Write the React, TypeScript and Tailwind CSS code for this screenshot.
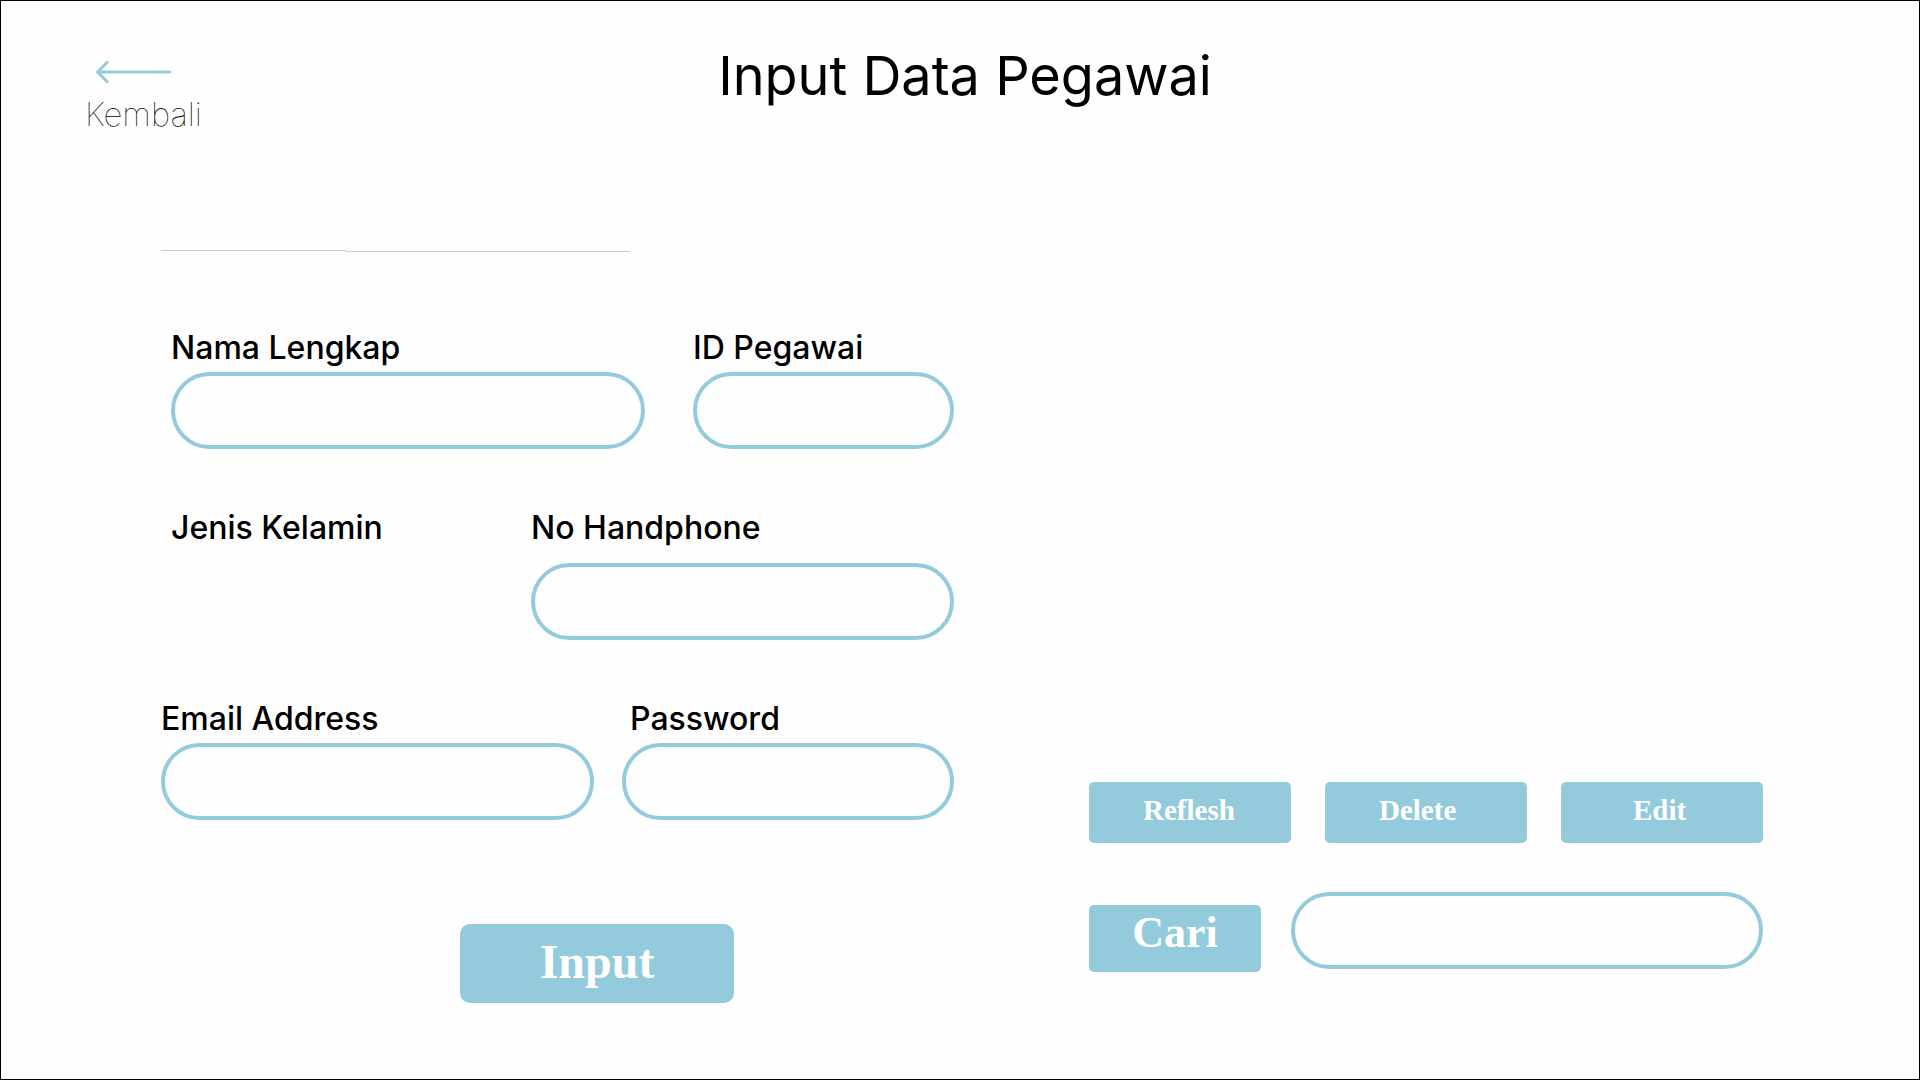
import { useId } from "react";

const pill =
  "h-[77px] w-full min-w-0 rounded-full border-4 border-[#93cbdc] bg-transparent px-8 text-2xl outline-none focus:border-[#5fb1c9]";

type FieldProps = {
  label: string;
  type?: string;
  className: string;
  labelClassName?: string;
};

function Field({ label, type = "text", className, labelClassName = "mb-1" }: FieldProps) {
  const id = useId();
  return (
    <div className={`flex min-w-0 flex-col ${className}`}>
      <label htmlFor={id} className={`text-[32px] leading-10 font-medium whitespace-nowrap ${labelClassName}`}>
        {label}
      </label>
      <input id={id} type={type} className={pill} />
    </div>
  );
}

function BackArrow() {
  return (
    <svg width="78" height="24" viewBox="0 0 78 24" fill="none" stroke="#93cbdc" strokeWidth="3" aria-hidden="true">
      <path d="M77 12H4" />
      <path d="M14 1.5L3.5 12L14 22.5" strokeLinejoin="round" />
    </svg>
  );
}

const actions = [
  { label: "Reflesh", padding: "pl-[54px]" },
  { label: "Delete", padding: "pl-[54px]" },
  { label: "Edit", padding: "pl-[72px]" },
];

export default function App() {
  return (
    <div className="min-h-screen border border-black bg-[#fefefe] pt-[45px] font-['Inter',sans-serif] text-black">
      <header className="grid grid-cols-[1fr_auto_1fr] items-start pr-[74px] pl-[84px]">
        <a href="#kembali" className="mt-3.5 flex flex-col items-start gap-3 justify-self-start">
          <span className="pl-[9px]">
            <BackArrow />
          </span>
          <span className="text-[33px] leading-9 font-thin">Kembali</span>
        </a>
        <h1 className="text-[54px] leading-[60px] font-normal">Input Data Pegawai</h1>
      </header>

      <main className="mt-[118px] grid grid-cols-[793fr_674fr] gap-[135px] pr-[156px] pl-40">
        <form className="flex flex-col" onSubmit={(event) => event.preventDefault()}>
          <div className="flex h-0.5" aria-hidden="true">
            <div className="h-px w-[23.3%] bg-[#cccccc]" />
            <div className="mt-px h-px w-[35.9%] bg-[#cccccc]" />
          </div>

          <div className="mt-[76px] flex gap-12 pl-2.5">
            <Field label="Nama Lengkap" className="flex-[474]" />
            <Field label="ID Pegawai" className="flex-[261]" />
          </div>

          <div className="mt-[59px] flex pl-2.5">
            <p className="flex-[360] text-[32px] leading-10 font-medium whitespace-nowrap">Jenis Kelamin</p>
            <Field label="No Handphone" type="tel" className="flex-[423]" labelClassName="mb-[15px]" />
          </div>

          <div className="mt-[59px] flex gap-7">
            <Field label="Email Address" type="email" className="flex-[433]" />
            <Field label="Password" type="password" className="flex-[332]" labelClassName="mb-1 pl-2" />
          </div>

          <button
            type="submit"
            className="mt-[104px] ml-[299px] h-[79px] w-[274px] rounded-[10px] bg-[#93cbdc] pb-1 font-['Liberation_Serif',serif] text-5xl font-bold text-white"
          >
            Input
          </button>
        </form>

        <section className="self-end pb-[31px]">
          <div className="grid grid-cols-3 gap-[34px]">
            {actions.map(({ label, padding }) => (
              <button
                key={label}
                type="button"
                className={`h-[61px] rounded-[5px] bg-[#93cbdc] pb-1 text-left font-['Liberation_Serif',serif] text-[29px] font-bold text-white ${padding}`}
              >
                {label}
              </button>
            ))}
          </div>

          <form
            role="search"
            className="mt-[49px] flex items-start gap-[30px]"
            onSubmit={(event) => event.preventDefault()}
          >
            <button
              type="submit"
              className="mt-[13px] h-[67px] w-[172px] shrink-0 rounded-[5px] bg-[#93cbdc] pb-3 font-['Liberation_Serif',serif] text-[44px] leading-[55px] font-bold text-white"
            >
              Cari
            </button>
            <input type="search" aria-label="Cari pegawai" className={pill} />
          </form>
        </section>
      </main>
    </div>
  );
}
